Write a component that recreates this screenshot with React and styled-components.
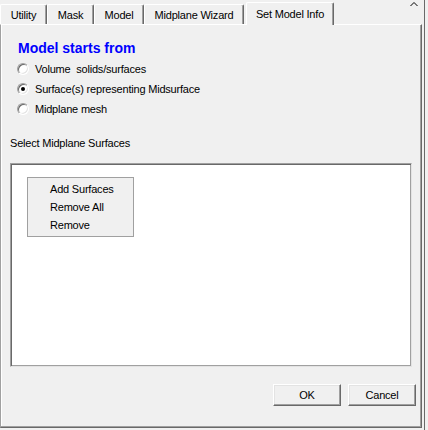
import React, { useState } from "react";
import styled, { createGlobalStyle } from "styled-components";

const GlobalStyle = createGlobalStyle`
    html, body {
        margin: 0;
        padding: 0;
        background: #f0f0f0;
    }
    body {
        font-family: "Liberation Sans", Arial, sans-serif;
        font-size: 11px;
        letter-spacing: -0.2px;
        color: #000;
    }
    * {
        box-sizing: border-box;
    }
`;

const tabs = [
    { label: "Utility", width: 47 },
    { label: "Mask", width: 47 },
    { label: "Model", width: 50 },
    { label: "Midplane Wizard", width: 100 },
    { label: "Set Model Info", width: 88 },
];

const sources = [
    "Volume  solids/surfaces",
    "Surface(s) representing Midsurface",
    "Midplane mesh",
];

const menuItems = ["Add Surfaces", "Remove All", "Remove"];

const Radio = ({ label, checked, onPick }) => (
    <RadioRow onClick={onPick}>
        <RadioDot $checked={checked} />
        <RadioText>{label}</RadioText>
    </RadioRow>
);

const App = () => {
    const [activeTab, setActiveTab] = useState("Set Model Info");
    const [source, setSource] = useState(1);

    return (
        <>
            <GlobalStyle />
            <Frame>
                <TabStrip>
                    {tabs.map((tab) => (
                        <Tab
                            key={tab.label}
                            $width={tab.width}
                            $active={activeTab === tab.label}
                            onClick={() => setActiveTab(tab.label)}
                        >
                            {tab.label}
                        </Tab>
                    ))}
                    <Caret width="8" height="6" viewBox="0 0 8 6">
                        <polyline
                            points="0.5,5 4,1.5 7.5,5"
                            fill="none"
                            stroke="#000"
                            strokeWidth="1"
                        />
                    </Caret>
                </TabStrip>
                <Panel>
                    <Title>Model starts from</Title>
                    <RadioGroup>
                        {sources.map((s, i) => (
                            <Radio
                                key={s}
                                label={s}
                                checked={source === i}
                                onPick={() => setSource(i)}
                            />
                        ))}
                    </RadioGroup>
                    <Label>Select Midplane Surfaces</Label>
                    <ListBox>
                        <Menu>
                            {menuItems.map((item) => (
                                <MenuItem key={item}>{item}</MenuItem>
                            ))}
                        </Menu>
                    </ListBox>
                    <ButtonRow>
                        <Button>OK</Button>
                        <Button>Cancel</Button>
                    </ButtonRow>
                </Panel>
            </Frame>
        </>
    );
};

export default App;

const Frame = styled.div`
    width: 425px;
    height: 430px;
    display: flex;
    flex-direction: column;
    border-right: 1px solid #696969;
    padding-bottom: 2px;
    background: #f0f0f0;
`;

const TabStrip = styled.div`
    height: 24px;
    display: flex;
    align-items: flex-end;
    margin-right: 2px;
`;

const Tab = styled.div`
    width: ${(p) => p.$width}px;
    height: ${(p) => (p.$active ? 23 : 20)}px;
    margin-left: ${(p) => (p.$active ? 2 : 0)}px;
    margin-bottom: ${(p) => (p.$active ? -1 : 0)}px;
    padding-top: ${(p) => (p.$active ? 5 : 4)}px;
    position: relative;
    z-index: ${(p) => (p.$active ? 1 : 0)};
    background: #f0f0f0;
    border-top: 1px solid #fff;
    border-left: 1px solid #fff;
    border-right: 1px solid #696969;
    border-radius: 2px 2px 0 0;
    box-shadow: inset -1px 0 #a0a0a0;
    text-align: center;
    line-height: 13px;
    white-space: nowrap;
    cursor: default;
`;

const Caret = styled.svg`
    align-self: flex-start;
    margin: 1px 4px 0 auto;
`;

const Panel = styled.div`
    flex: 1;
    display: flex;
    flex-direction: column;
    margin-right: 2px;
    border-top: 1px solid #fff;
    border-left: 1px solid #a0a0a0;
    border-right: 1px solid #696969;
    border-bottom: 1px solid #696969;
    box-shadow: inset -1px -1px #a0a0a0, inset 1px 0 #fff;
    padding: 15px 5px 0 9px;
`;

const Title = styled.div`
    margin-left: 8px;
    font-size: 14px;
    font-weight: bold;
    letter-spacing: 0;
    line-height: 16px;
    color: #0000ff;
`;

const RadioGroup = styled.div`
    margin: 3px 0 0 7px;
    display: flex;
    flex-direction: column;
`;

const RadioRow = styled.div`
    height: 20px;
    display: flex;
    align-items: center;
    gap: 6px;
    cursor: default;
`;

const RadioDot = styled.span`
    position: relative;
    width: 12px;
    height: 12px;
    border-radius: 50%;
    border: 1px solid;
    border-color: #a0a0a0 #fff #fff #a0a0a0;
    background: #fff;
    box-shadow: inset 1px 1px #696969, inset -1px -1px #e3e3e3;
    &::after {
        content: "";
        display: ${(p) => (p.$checked ? "block" : "none")};
        position: absolute;
        left: 3px;
        top: 3px;
        width: 4px;
        height: 4px;
        border-radius: 50%;
        background: #000;
    }
`;

const RadioText = styled.span`
    line-height: 13px;
    white-space: pre;
`;

const Label = styled.div`
    margin-top: 17px;
    line-height: 14px;
`;

const ListBox = styled.div`
    margin: 13px 4px 0 0;
    height: 204px;
    background: #fff;
    border: 1px solid;
    border-color: #a0a0a0 #e3e3e3 #e3e3e3 #a0a0a0;
    box-shadow: inset 1px 1px #696969, inset -1px -1px #a0a0a0;
    padding: 13px 0 0 16px;
`;

const Menu = styled.div`
    width: 107px;
    padding: 2px 0;
    background: #f0f0f0;
    border: 1px solid #a0a0a0;
    display: flex;
    flex-direction: column;
`;

const MenuItem = styled.div`
    padding-left: 22px;
    line-height: 18px;
    cursor: default;
`;

const ButtonRow = styled.div`
    margin-top: 17px;
    display: flex;
    justify-content: flex-end;
    gap: 7px;
`;

const Button = styled.button`
    width: 68px;
    height: 22px;
    padding: 0;
    font: inherit;
    letter-spacing: inherit;
    color: #000;
    background: #f0f0f0;
    border: 1px solid;
    border-color: #fff #696969 #696969 #fff;
    box-shadow: inset -1px -1px #a0a0a0, inset 1px 1px #e3e3e3;
    border-radius: 0;
    cursor: default;
`;
